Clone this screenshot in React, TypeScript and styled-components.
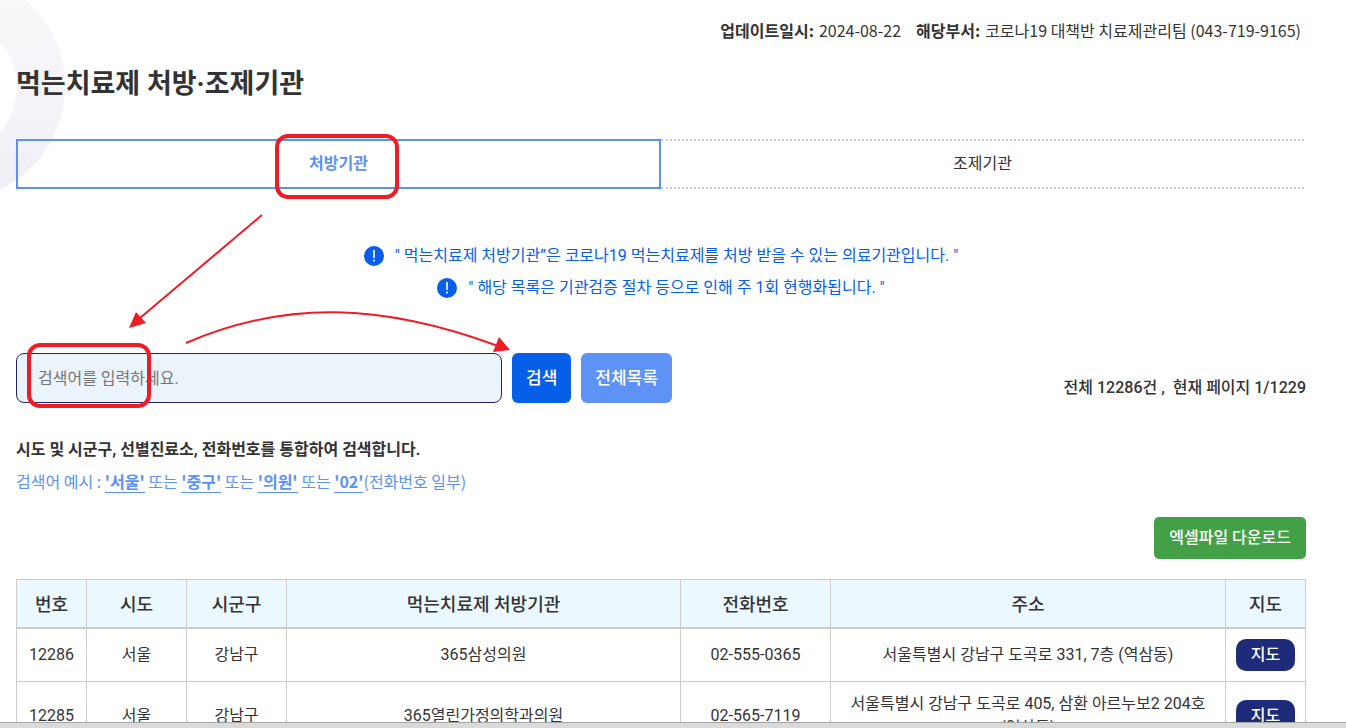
import React from "react";
import styled, { createGlobalStyle, css } from "styled-components";

const CJK_FIRST = `"Noto Sans CJK KR", "Noto Sans", sans-serif`;

const GlobalStyle = createGlobalStyle`
  *, *::before, *::after { box-sizing: border-box; }
  body {
    margin: 0;
    background: #fff;
    color: #333;
    font-family: Roboto, "Noto Sans CJK KR", sans-serif;
    font-size: 16px;
    line-height: 24px;
  }
  button, input { font: inherit; }
`;

const RED = "#ee1c25";

const Frame = styled.div`
  display: flex;
  flex-direction: column;
  height: 100vh;
`;

const Viewport = styled.main`
  position: relative;
  flex: 1;
  min-height: 0;
  overflow: hidden;
  padding: 0 40px 0 16px;
`;

const WindowEdge = styled.div`
  flex: none;
  height: 6px;
  background: #dadada;
  border-top: 1px solid #a6a6a6;
`;

const Ring = styled.svg`
  position: absolute;
  top: 0;
  left: 0;
  z-index: -1;
`;

const Meta = styled.dl`
  display: flex;
  justify-content: flex-end;
  gap: 15px;
  margin: 0;
  padding: 18px 5px 0 0;
  font-family: ${CJK_FIRST};
`;

const MetaItem = styled.div`
  display: flex;
  gap: 5px;
  dt { font-weight: 700; }
  dd { margin: 0; }
`;

const Title = styled.h1`
  margin: 22px 0 0;
  font-size: 27px;
  line-height: 40px;
  font-weight: 700;
`;

const Tabs = styled.div`
  display: grid;
  grid-template-columns: 1fr 1fr;
  margin-top: 35px;
`;

const Tab = styled.button<{ $active?: boolean }>`
  height: 50px;
  padding: 0;
  background: transparent;
  color: #333;
  border: 2px dotted #ccc;
  border-width: 2px 0;
  ${(p) =>
    p.$active
      ? css`
          color: #5c91f5;
          font-weight: 700;
          border: 2px solid #5c91f5;
        `
      : css`
          margin-right: 2px;
        `}
`;

const Notices = styled.ul`
  list-style: none;
  margin: 51px 0 0;
  padding: 0;
  color: #075ee8;
`;

const Notice = styled.li`
  display: flex;
  justify-content: center;
  align-items: center;
  gap: 11px;
  line-height: 32px;
`;

const SearchRow = styled.form`
  display: flex;
  align-items: center;
  gap: 10px;
  margin-top: 49px;
`;

const SearchInput = styled.input`
  width: 486px;
  height: 50px;
  padding: 0 21px;
  border: 1px solid #20206e;
  border-radius: 8px;
  background: #ebf3fb;
  &::placeholder { color: #757575; opacity: 1; }
`;

const SearchButton = styled.button<{ $light?: boolean }>`
  height: 50px;
  padding: 0 14px;
  border: 0;
  border-radius: 6px;
  background: ${(p) => (p.$light ? "#5f92f7" : "#075ee8")};
  color: #fff;
  font-size: 17px;
  font-weight: 500;
`;

const Count = styled.p`
  margin: 20px 0 0 auto;
  font-weight: 500;
  white-space: pre;
`;

const Help = styled.p`
  margin: 31px 0 0;
  font-weight: 700;
  line-height: 32px;
`;

const Example = styled.p`
  margin: 0;
  color: #5c91f5;
  font-family: ${CJK_FIRST};
  line-height: 30px;
`;

const Keyword = styled.a`
  display: inline-block;
  color: inherit;
  font-weight: 700;
  line-height: 22px;
  text-decoration: none;
  border-bottom: 1px solid;
`;

const Actions = styled.div`
  display: flex;
  justify-content: flex-end;
  margin: 21px 0 20px;
`;

const ExcelButton = styled.button`
  height: 42px;
  padding: 0 15px;
  border: 0;
  border-radius: 5px;
  background: #43a047;
  color: #fff;
  font-weight: 500;
`;

const Table = styled.table`
  width: 100%;
  table-layout: fixed;
  border-collapse: collapse;
  text-align: center;
  th, td { border: 1px solid #ccc; }
  th {
    height: 48px;
    padding: 3px 0 0;
    background: #ecf8ff;
    border-bottom-width: 2px;
    font-size: 18px;
    font-weight: 500;
  }
  td { padding: 10px; word-break: keep-all; }
`;

const Col = styled.col<{ $w?: number }>`
  ${(p) => p.$w && css`width: ${p.$w}px;`}
`;

const MapButton = styled.button`
  display: block;
  width: 59px;
  height: 32px;
  margin: 0 auto;
  padding: 0;
  border: 0;
  border-radius: 10px;
  background: #1e2b78;
  color: #fff;
  font-weight: 500;
`;

const MapCell = styled.td`
  && { padding: 10px 0; }
`;

const Marks = styled.svg`
  position: absolute;
  top: 0;
  left: 0;
  pointer-events: none;
`;

const rows = [
  ["12286", "서울", "강남구", "365삼성의원", "02-555-0365", "서울특별시 강남구 도곡로 331, 7층 (역삼동)"],
  ["12285", "서울", "강남구", "365열린가정의학과의원", "02-565-7119", "서울특별시 강남구 도곡로 405, 삼환 아르누보2 204호 (역삼동)"],
];

const NoticeIcon = () => (
  <svg width="20" height="20" viewBox="0 0 20 20" aria-hidden="true">
    <circle cx="10" cy="10" r="10" fill="#075ee8" />
    <path d="M10 4v8M10 13.5v2" stroke="#fff" strokeWidth="1.6" />
  </svg>
);

export default function App() {
  return (
    <Frame>
      <GlobalStyle />
      <Viewport>
        <Ring width="70" height="210" aria-hidden="true">
          <defs>
            <linearGradient id="ring" x1="0" y1="0" x2="0" y2="1">
              <stop offset="0" stopColor="#fafafb" />
              <stop offset="1" stopColor="#efeef6" />
            </linearGradient>
          </defs>
          <path
            fill="url(#ring)"
            fillRule="evenodd"
            d="M-165 86a115 115 0 1 0 230 0a115 115 0 1 0 -230 0M-117 87a67 67 0 1 0 134 0a67 67 0 1 0 -134 0"
          />
        </Ring>
        <Meta>
          <MetaItem><dt>업데이트일시:</dt><dd>2024-08-22</dd></MetaItem>
          <MetaItem><dt>해당부서:</dt><dd>코로나19 대책반 치료제관리팀 (043-719-9165)</dd></MetaItem>
        </Meta>
        <Title>먹는치료제 처방·조제기관</Title>
        <Tabs role="tablist">
          <Tab type="button" role="tab" aria-selected $active>처방기관</Tab>
          <Tab type="button" role="tab" aria-selected={false}>조제기관</Tab>
        </Tabs>
        <Notices>
          <Notice><NoticeIcon /><span>" 먹는치료제 처방기관”은 코로나19 먹는치료제를 처방 받을 수 있는 의료기관입니다. "</span></Notice>
          <Notice><NoticeIcon /><span>" 해당 목록은 기관검증 절차 등으로 인해 주 1회 현행화됩니다. "</span></Notice>
        </Notices>
        <SearchRow onSubmit={(e) => e.preventDefault()}>
          <SearchInput type="text" aria-label="검색어" placeholder="검색어를 입력하세요." />
          <SearchButton type="submit">검색</SearchButton>
          <SearchButton type="button" $light>전체목록</SearchButton>
          <Count>{"전체 12286건 ,  현재 페이지 1/1229"}</Count>
        </SearchRow>
        <Help>시도 및 시군구, 선별진료소, 전화번호를 통합하여 검색합니다.</Help>
        <Example>
          검색어 예시 : <Keyword href="#">'서울'</Keyword> 또는 <Keyword href="#">'중구'</Keyword> 또는{" "}
          <Keyword href="#">'의원'</Keyword> 또는 <Keyword href="#">'02'</Keyword>(전화번호 일부)
        </Example>
        <Actions><ExcelButton type="button">엑셀파일 다운로드</ExcelButton></Actions>
        <Table>
          <colgroup>
            <Col $w={70} /><Col $w={100} /><Col $w={100} /><Col /><Col $w={150} /><Col $w={395} /><Col $w={80} />
          </colgroup>
          <thead>
            <tr>
              {["번호", "시도", "시군구", "먹는치료제 처방기관", "전화번호", "주소", "지도"].map((h) => (
                <th key={h} scope="col">{h}</th>
              ))}
            </tr>
          </thead>
          <tbody>
            {rows.map((r) => (
              <tr key={r[0]}>
                {r.map((c, i) => <td key={i}>{c}</td>)}
                <MapCell><MapButton type="button">지도</MapButton></MapCell>
              </tr>
            ))}
          </tbody>
        </Table>
        <Marks width="520" height="420" fill="none" stroke={RED} aria-hidden="true">
          <rect x="277" y="136" width="120" height="61" rx="11" strokeWidth="4" />
          <rect x="29" y="345" width="120" height="61" rx="11" strokeWidth="4" />
          <path d="M262 215L140 318M186 343C285 300 382 303 498 346" strokeWidth="2" />
          <path d="M129 328L136 312L146 323ZM510 350L499 337L493 352Z" fill={RED} stroke="none" />
        </Marks>
      </Viewport>
      <WindowEdge />
    </Frame>
  );
}
